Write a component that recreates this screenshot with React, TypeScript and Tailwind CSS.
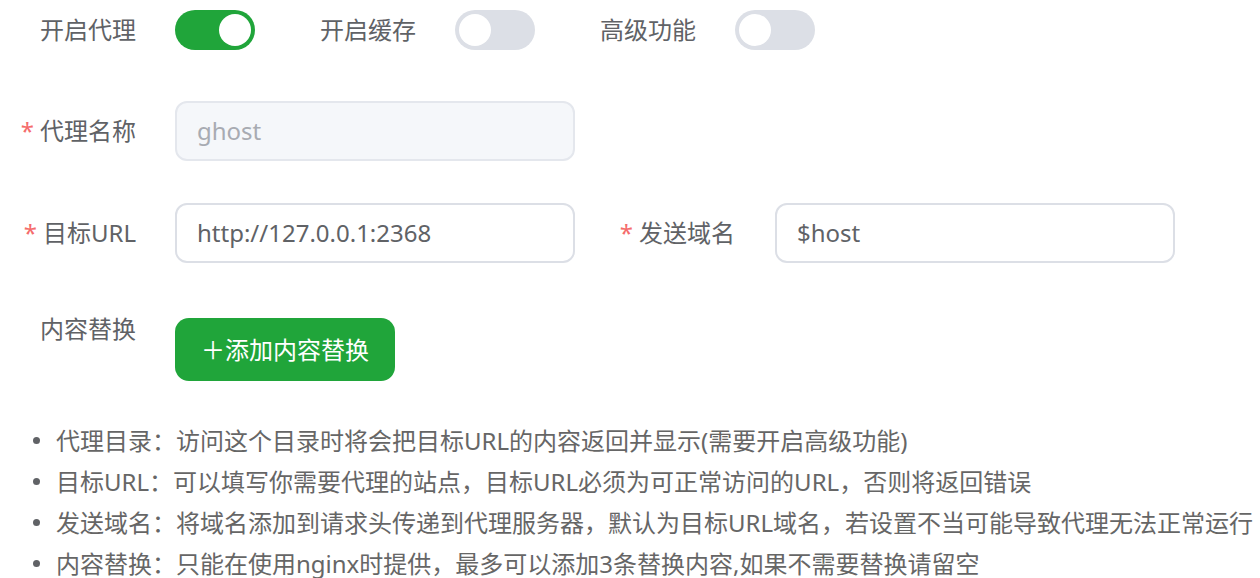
import React from 'react';

const font = { fontFamily: '"Noto Sans", "Noto Sans CJK SC", sans-serif' };

function Toggle({ on }: { on: boolean }) {
  return (
    <div
      className={`flex h-10 w-20 shrink-0 items-center rounded-full px-1 ${
        on ? 'justify-end bg-[#20a53a]' : 'justify-start bg-[#dcdfe6]'
      }`}
    >
      <div className="h-8 w-8 rounded-full bg-white" />
    </div>
  );
}

function SwitchItem({ label, on }: { label: string; on: boolean }) {
  return (
    <div className="flex w-[280px] items-center">
      <div className="w-[136px] text-right leading-[60px] text-[#606266]">{label}</div>
      <div className="ml-[39px]">
        <Toggle on={on} />
      </div>
    </div>
  );
}

function Label({ text, required, width }: { text: string; required?: boolean; width: string }) {
  return (
    <div className={`${width} shrink-0 text-right leading-[60px] text-[#606266]`}>
      {required && <span className="mr-[6px] text-[#f56c6c]">*</span>}
      {text}
    </div>
  );
}

const tips = [
  '代理目录：访问这个目录时将会把目标URL的内容返回并显示(需要开启高级功能)',
  '目标URL：可以填写你需要代理的站点，目标URL必须为可正常访问的URL，否则将返回错误',
  '发送域名：将域名添加到请求头传递到代理服务器，默认为目标URL域名，若设置不当可能导致代理无法正常运行',
  '内容替换：只能在使用nginx时提供，最多可以添加3条替换内容,如果不需要替换请留空',
];

export default function App() {
  return (
    <div className="w-[1260px] bg-white text-[24px]" style={font}>
      {/* 开关 */}
      <div className="flex h-[60px] items-center">
        <SwitchItem label="开启代理" on />
        <SwitchItem label="开启缓存" on={false} />
        <SwitchItem label="高级功能" on={false} />
      </div>

      {/* 代理名称 */}
      <div className="mt-[41px] flex h-[60px] items-center">
        <Label text="代理名称" required width="w-[136px]" />
        <div className="ml-[39px] flex h-[60px] w-[400px] items-center rounded-xl border-2 border-[#e4e7ed] bg-[#f5f7fa] px-5 text-[#a8abb2]">
          ghost
        </div>
      </div>

      {/* 目标URL / 发送域名 */}
      <div className="mt-[42px] flex h-[60px] items-center">
        <Label text="目标URL" required width="w-[136px]" />
        <div className="ml-[39px] flex h-[60px] w-[400px] items-center rounded-xl border-2 border-[#dcdfe6] bg-white px-5 text-[#606266]">
          http://127.0.0.1:2368
        </div>
        <Label text="发送域名" required width="w-[160px]" />
        <div className="ml-10 flex h-[60px] w-[400px] items-center rounded-xl border-2 border-[#dcdfe6] bg-white px-5 text-[#606266]">
          $host
        </div>
      </div>

      {/* 内容替换 */}
      <div className="mt-[36px] flex items-start">
        <Label text="内容替换" width="w-[136px]" />
        <button className="ml-[39px] mt-[19px] h-[63px] w-[220px] rounded-[14px] bg-[#20a53a] text-center text-white">
          ＋添加内容替换
        </button>
      </div>

      {/* 说明 */}
      <ul className="mt-[39px] text-[#666666]">
        {tips.map((t) => (
          <li key={t} className="flex items-center leading-[41px]">
            <span className="ml-[33px] mr-[16px] h-[7px] w-[7px] shrink-0 rounded-full bg-[#606266]" />
            <span className="whitespace-nowrap">{t}</span>
          </li>
        ))}
      </ul>
    </div>
  );
}
